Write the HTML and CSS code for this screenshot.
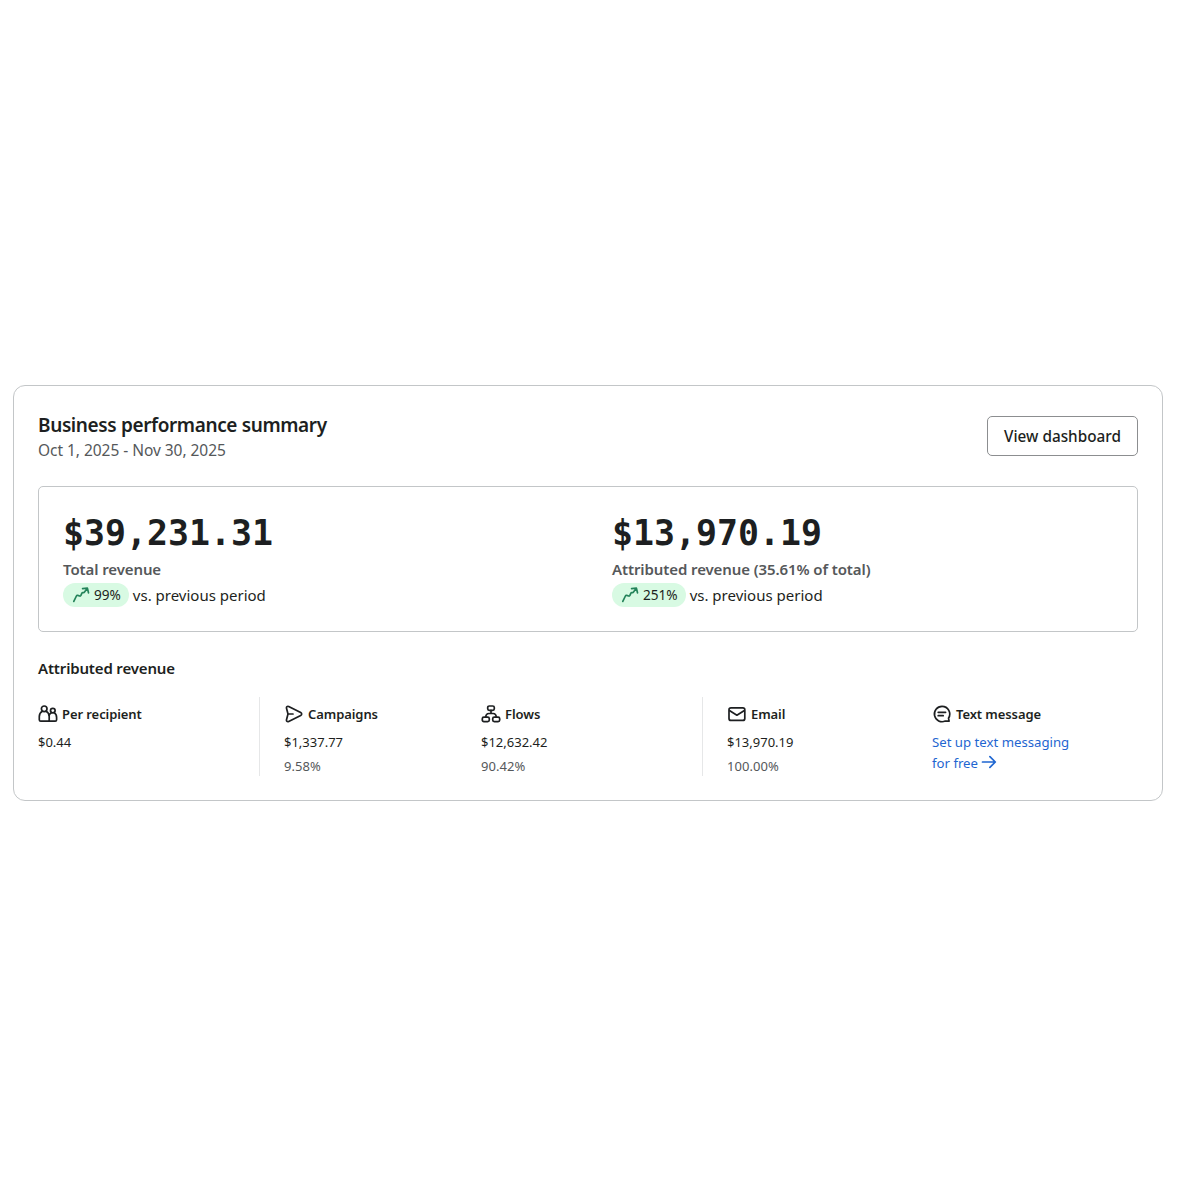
FILE: index.html
```html
<!DOCTYPE html>
<html lang="en">

<head>
  <meta charset="UTF-8">
  <meta name="viewport" content="width=device-width, initial-scale=1.0">
  <title>Business performance summary</title>
  <link rel="stylesheet" href="styles.css">
</head>

<body>
  <section class="card">
    <header class="card-header">
      <div>
        <h1>Business performance summary</h1>
        <p class="dates">Oct 1, 2025 - Nov 30, 2025</p>
      </div>
      <button type="button" class="btn">View dashboard</button>
    </header>

    <div class="totals">
      <div class="total">
        <div class="amount">$39,231.31</div>
        <div class="label">Total revenue</div>
        <div class="compare">
          <span class="badge">
            <svg width="18" height="18" viewBox="0 0 18 18"><path d="M1.8 15.4 4.4 10q.4-.8 1.3-.6l2 .6q.8.2 1.2-.6l1-2.2q.4-.8 1.2-.6.9.2 1.4-.6l2.7-3.6M10.6 2.7l4.8-.5 1.1 4.6"/></svg>
            <span>99%</span>
          </span>
          <span class="versus">vs. previous period</span>
        </div>
      </div>
      <div class="total">
        <div class="amount">$13,970.19</div>
        <div class="label">Attributed revenue (35.61% of total)</div>
        <div class="compare">
          <span class="badge">
            <svg width="18" height="18" viewBox="0 0 18 18"><path d="M1.8 15.4 4.4 10q.4-.8 1.3-.6l2 .6q.8.2 1.2-.6l1-2.2q.4-.8 1.2-.6.9.2 1.4-.6l2.7-3.6M10.6 2.7l4.8-.5 1.1 4.6"/></svg>
            <span>251%</span>
          </span>
          <span class="versus">vs. previous period</span>
        </div>
      </div>
    </div>

    <h2>Attributed revenue</h2>

    <div class="breakdown">
      <div class="item">
        <h3>
          <svg width="20" height="20" viewBox="0 0 20 20"><circle cx="6.2" cy="4.8" r="2.8"/><path d="M4.4 7.2c-2 1-3.1 2.9-3.1 5.4v3.2c0 .9.5 1.4 1.4 1.4h8.5v-4.6c0-2.5-1.1-4.4-3.1-5.4"/><circle cx="14.8" cy="6.6" r="2.3"/><path d="M11.2 17.2h6c.9 0 1.4-.5 1.4-1.4v-2.4c0-2.2-.8-3.8-2.4-4.7M13.4 8.7c-1 .5-1.7 1.3-2.2 2.3"/></svg>
          Per recipient
        </h3>
        <div class="value">$0.44</div>
      </div>
      <div class="item divided">
        <h3>
          <svg width="20" height="20" viewBox="0 0 20 20"><path d="M2.5 4.3c-.4-1.6.8-2.4 2.2-1.8l12 6.1c1.3.7 1.3 2.1 0 2.8l-12 6.1c-1.4.6-2.6-.2-2.2-1.8L4 10zM4 10h5"/></svg>
          Campaigns
        </h3>
        <div class="value">$1,337.77</div>
        <div class="share">9.58%</div>
      </div>
      <div class="item">
        <h3>
          <svg width="20" height="20" viewBox="0 0 20 20"><rect x="6.7" y="2" width="6.6" height="4.4" rx="1.6"/><rect x="1.3" y="13.2" width="7" height="4.4" rx="1.6"/><rect x="11.7" y="13.2" width="7" height="4.4" rx="1.6"/><path d="M10 6.4v3.1M4.8 13.2c0-2.5 1.3-3.7 3.2-3.7h4c1.9 0 3.2 1.2 3.2 3.7"/></svg>
          Flows
        </h3>
        <div class="value">$12,632.42</div>
        <div class="share">90.42%</div>
      </div>
      <div class="item divided">
        <h3>
          <svg width="20" height="20" viewBox="0 0 20 20"><rect x="2" y="3.8" width="15.8" height="12.6" rx="2"/><path d="m2.8 6.8 7.1 4.4 7.1-4.4"/></svg>
          Email
        </h3>
        <div class="value">$13,970.19</div>
        <div class="share">100.00%</div>
      </div>
      <div class="item">
        <h3>
          <svg width="20" height="20" viewBox="0 0 20 20"><path d="M10 2.3a7.7 7.7 0 1 0 3.3 14.7l3.8.2-.6-3A7.7 7.7 0 0 0 10 2.3zM6.2 8.3h7.4M6.2 11.7h5"/></svg>
          Text message
        </h3>
        <a href="#" class="setup">
          Set up text messaging<br>
          for free
          <svg width="16" height="16" viewBox="0 0 16 16"><path d="M1.5 8h12.5M8.9 2.6 14.3 8l-5.4 5.4"/></svg>
        </a>
      </div>
    </div>
  </section>
</body>

</html>
```
FILE: styles.css
```css
* {
  box-sizing: border-box;
}

body {
  margin: 0;
  padding: 385px 17px 0 13px;
  background: #fff;
  color: #1d1f21;
  font-family: "Noto Sans", "Open Sans", sans-serif;
  font-size: 15px;
}

h1, h2, h3, p {
  margin: 0;
}

svg {
  flex: none;
  fill: none;
  stroke: currentColor;
  stroke-width: 1.7;
  stroke-linecap: round;
  stroke-linejoin: round;
}

.card {
  height: 416px;
  padding: 24px;
  border: 1px solid #c3c6c8;
  border-radius: 12px;
}

.card-header {
  display: flex;
  justify-content: space-between;
  height: 76px;
}

h1 {
  padding-top: 1px;
  font-size: 19px;
  font-weight: 600;
  line-height: 28px;
  letter-spacing: -0.38px;
}

.dates {
  color: #55585a;
  font-size: 15.5px;
  line-height: 22px;
  letter-spacing: -0.04px;
}

.btn {
  width: 151px;
  height: 40px;
  margin-top: 6px;
  padding: 0;
  border: 1px solid #8c8e90;
  border-radius: 5px;
  background: #fff;
  color: inherit;
  font: 500 15.3px "Noto Sans", sans-serif;
}

.totals {
  display: grid;
  grid-template-columns: 1fr 1fr;
  height: 146px;
  padding: 24px 0 0 24px;
  border: 1px solid #c3c6c8;
  border-radius: 5px;
}

.total + .total {
  margin-left: 12px;
}

.amount {
  font: bold 34.9px/44px "DejaVu Sans Mono", monospace;
}

.label {
  color: #55585a;
  font-weight: 600;
  line-height: 28px;
  letter-spacing: -0.1px;
}

.compare {
  display: flex;
  align-items: center;
  gap: 4px;
}

.badge {
  display: flex;
  align-items: center;
  gap: 4px;
  height: 24px;
  padding: 0 8px 0 9px;
  border-radius: 12px;
  background: #d8fae3;
  font-size: 13.6px;
  line-height: 18px;
}

.badge svg {
  color: #24835a;
}

h2 {
  padding-top: 24px;
  font-size: 15px;
  font-weight: 600;
  line-height: 25px;
  letter-spacing: -0.16px;
}

.breakdown {
  display: grid;
  grid-template-columns: 221px 222px 221px 230px 1fr;
  height: 79px;
  margin-top: 16px;
  font-size: 13px;
}

.item.divided {
  height: 79px;
  padding-left: 24px;
  border-left: 1px solid #e6e7e8;
}

h3 {
  display: flex;
  align-items: center;
  gap: 4px;
  height: 33px;
  font-size: 13px;
  font-weight: 600;
  letter-spacing: -0.08px;
}

.value {
  line-height: 24px;
}

.share {
  color: #55585a;
  line-height: 24px;
  letter-spacing: 0.05px;
}

.setup {
  display: block;
  padding-top: 2px;
  color: #1f66d1;
  font-size: 13.2px;
  line-height: 21px;
  text-decoration: none;
}

.setup svg {
  vertical-align: -2px;
}
```
